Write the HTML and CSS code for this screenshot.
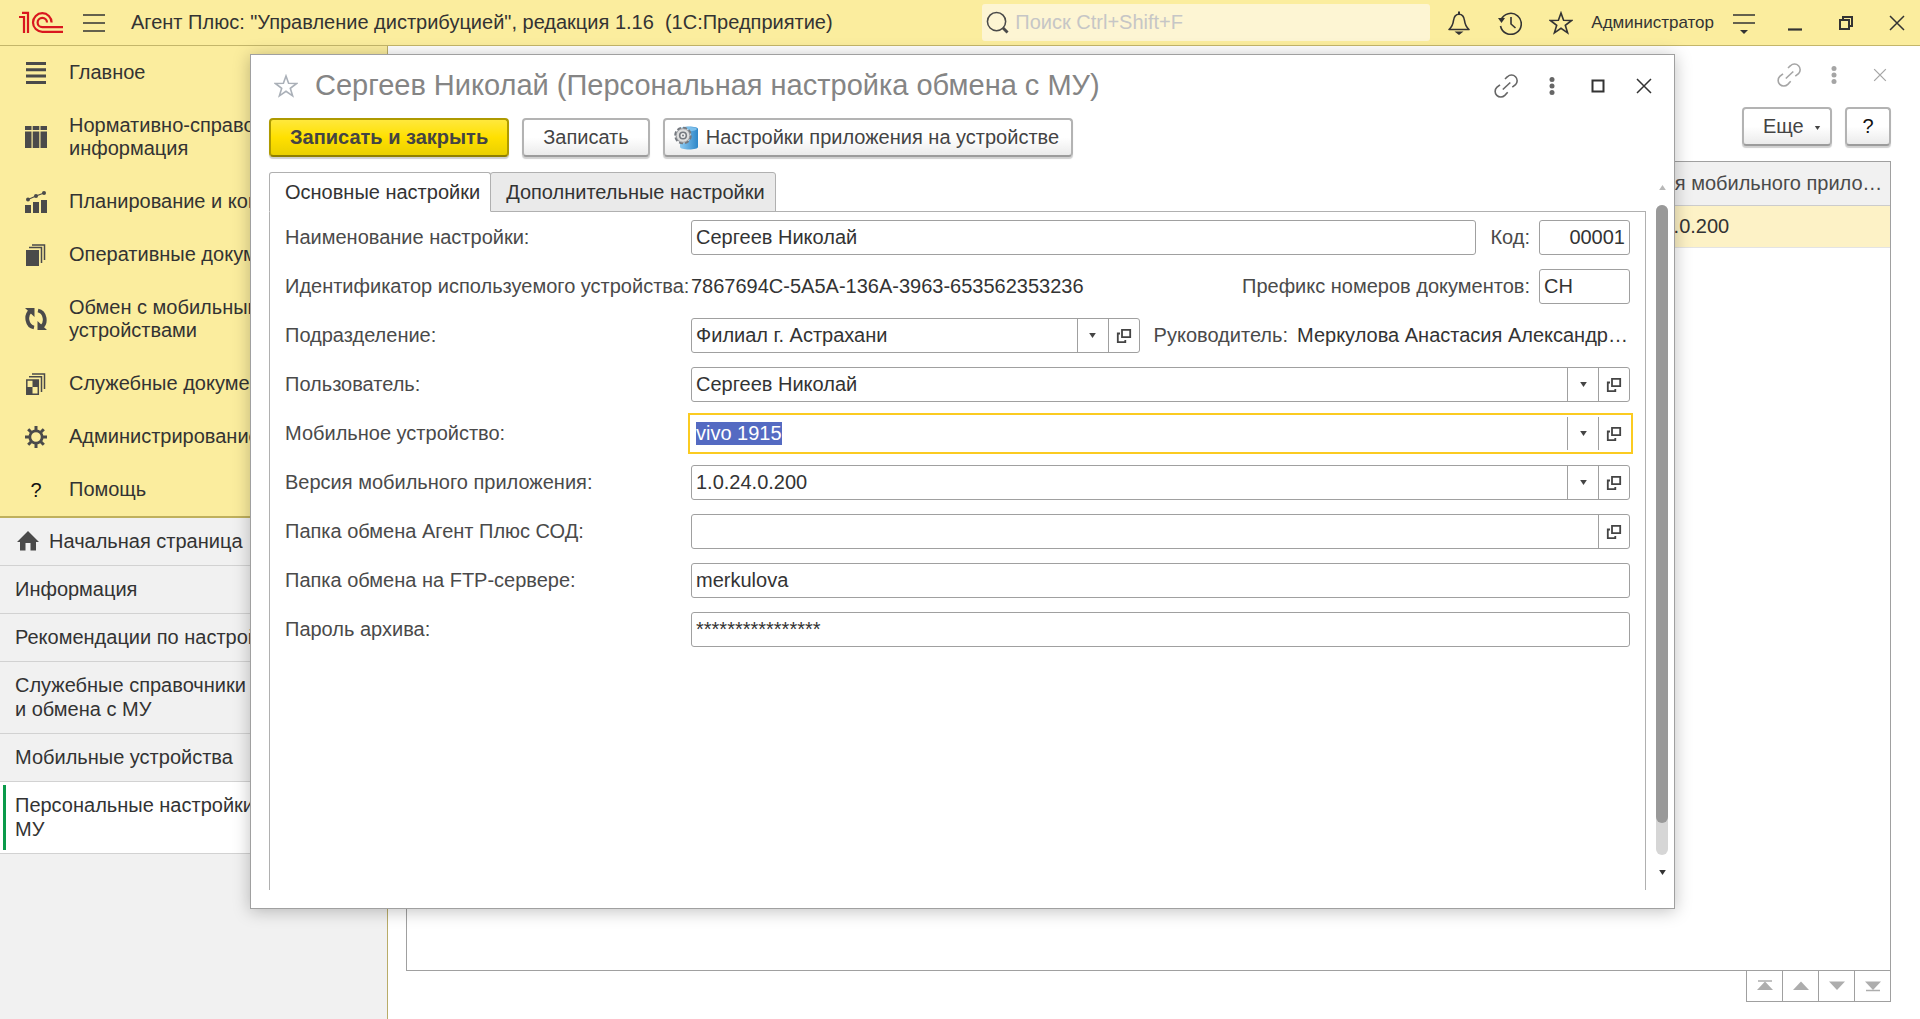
FILE: index.html
```html
<!DOCTYPE html>
<html lang="ru">
<head>
    <meta charset="UTF-8">
    <meta name="viewport" content="width=device-width, initial-scale=1.0">
    <title>Агент Плюс: Управление дистрибуцией</title>
    <link rel="stylesheet" href="styles.css">
</head>
<body>
    <!-- Общие иконки -->
    <svg class="sprite" aria-hidden="true">
        <symbol id="i-link" viewBox="0 0 24 24">
            <g fill="none" stroke="currentColor" stroke-width="1.600">
                <path d="M11 5l2.500-2.300a5.600 5.600 0 0 1 8 8L18.300 13.200"/>
                <path d="M6 10.800l-3.200 2.600a5.600 5.600 0 0 0 8 8l2.900-3.200"/>
                <path d="M8.800 15.500l7.500-7"/>
            </g>
        </symbol>
        <symbol id="i-dots" viewBox="0 0 24 24">
            <g fill="currentColor"><circle cx="12" cy="5.500" r="2.500"/><circle cx="12" cy="12" r="2.500"/><circle cx="12" cy="18.500" r="2.500"/></g>
        </symbol>
        <symbol id="i-close" viewBox="0 0 24 24">
            <path d="M5 5l14 14M19 5L5 19" fill="none" stroke="currentColor" stroke-width="1.500"/>
        </symbol>
        <symbol id="i-star" viewBox="0 0 24 24">
            <path d="M12 2l2.600 7.200 8 .3-6.300 4.800 2.300 7.500-6.600-4.500-6.600 4.500 2.300-7.500-6.300-4.800 8-.3z" fill="none" stroke="currentColor" stroke-width="1.600"/>
        </symbol>
        <symbol id="i-open" viewBox="0 0 16 16">
            <path d="M6 1.800h8.200v7.400H6zM4 5.500H1.800v8.700h7.500V12" fill="none" stroke="currentColor" stroke-width="1.800"/>
        </symbol>
        <symbol id="i-down" viewBox="0 0 8 6">
            <path d="M0 0h8L4 6z" fill="currentColor"/>
        </symbol>
    </svg>

    <!-- Верхняя панель -->
    <header class="topbar">
        <svg class="logo" viewBox="0 0 46 24" fill="none" stroke="#d9171f">
            <path d="M1 6h5v16M4 1.800h6V22" stroke-width="2.200"/>
            <path d="M33.600 11.500A9.300 9.300 0 1 0 24.300 20.800H45" stroke-width="2.200"/>
            <path d="M29 11.500A4.700 4.700 0 1 0 24.300 16.200H45" stroke-width="2.200"/>
        </svg>
        <button class="icon-btn menu-btn" aria-label="Меню">
            <svg viewBox="0 0 24 24"><path d="M1 4h22M1 12h22M1 20h22" stroke="currentColor" stroke-width="1.500"/></svg>
        </button>
        <h1 class="app-title">Агент Плюс: "Управление дистрибуцией", редакция 1.16&nbsp; (1С:Предприятие)</h1>
        <div class="search">
            <svg viewBox="0 0 24 24" fill="none" stroke="#4a4a4a"><circle cx="11" cy="11" r="9.500" stroke-width="1.600"/><path d="M17.500 17.500l5 5" stroke-width="3"/></svg>
            <input type="text" placeholder="Поиск Ctrl+Shift+F" aria-label="Поиск">
        </div>
        <div class="topbar-icons">
            <button class="icon-btn" aria-label="Уведомления">
                <svg viewBox="0 0 24 24"><path d="M2 18.500c3-2.500 4-5 4.500-9C7 5.500 9 3.200 12 3.200s5 2.300 5.500 6.300c.5 4 1.500 6.500 4.500 9z" fill="none" stroke="currentColor" stroke-width="1.600" stroke-linejoin="round"/><path d="M12 .5v3" stroke="currentColor" stroke-width="2"/><path d="M7.500 20.500h9L12 24z" fill="currentColor"/></svg>
            </button>
            <button class="icon-btn" aria-label="История">
                <svg viewBox="0 0 24 24"><path d="M3 9a10.500 10.500 0 1 1-.5 6M13 6v7l4.500 4" fill="none" stroke="currentColor" stroke-width="1.600"/><path d="M0 7h7l-3.500 5z" fill="currentColor"/></svg>
            </button>
            <button class="icon-btn" aria-label="Избранное"><svg><use href="#i-star"/></svg></button>
        </div>
        <a class="user" href="#">Администратор</a>
        <div class="topbar-icons">
            <button class="icon-btn" aria-label="Сервис">
                <svg viewBox="0 0 24 24"><path d="M1 4h22M1 12h22" stroke="currentColor" stroke-width="1.600"/><path d="M8 19h8l-4 4z" fill="currentColor"/></svg>
            </button>
            <button class="icon-btn" aria-label="Свернуть">
                <svg viewBox="0 0 24 24"><path d="M5 18.500h14" stroke="currentColor" stroke-width="2.200"/></svg>
            </button>
            <button class="icon-btn" aria-label="Восстановить">
                <svg viewBox="0 0 24 24" fill="none" stroke="currentColor" stroke-width="2"><path d="M6 9h9v9H6zM9 9V6h9v9h-3"/></svg>
            </button>
            <button class="icon-btn" aria-label="Закрыть"><svg><use href="#i-close"/></svg></button>
        </div>
    </header>

    <div class="workspace">
        <!-- Боковая панель -->
        <aside class="sidebar">
            <nav class="sections">
                <a class="section" href="#">
                    <svg viewBox="0 0 22 22"><path d="M1 1.500h20M1 7.800h20M1 14.100h20M1 20.400h20" stroke="currentColor" stroke-width="3"/></svg>
                    <span>Главное</span>
                </a>
                <a class="section" href="#">
                    <svg viewBox="0 0 22 22" fill="currentColor"><path d="M0 0h6.500v4H0zM7.700 0h6.600v4H7.700zM15.500 0H22v4h-6.500zM0 5.500h6.500V22H0zM7.700 5.500h6.600V22H7.700zM15.500 5.500H22V22h-6.500z"/></svg>
                    <span>Нормативно-справочная<br>информация</span>
                </a>
                <a class="section" href="#">
                    <svg viewBox="0 0 22 22" fill="currentColor"><path d="M0 14h6v8H0zM8 11h6v11H8zM16 9h6v13h-6z"/><circle cx="3" cy="8.500" r="2"/><circle cx="11" cy="5" r="2"/><circle cx="19" cy="2" r="2"/><path d="M3 8.500L11 5l8-3" fill="none" stroke="currentColor" stroke-width="1.200"/></svg>
                    <span>Планирование и контроль</span>
                </a>
                <a class="section" href="#">
                    <svg viewBox="0 0 22 22"><path d="M1 6h13v16H1z" fill="currentColor"/><path d="M4 3.500h12.500V19M7 1h12.500v15" fill="none" stroke="currentColor" stroke-width="1.500"/></svg>
                    <span>Оперативные документы</span>
                </a>
                <a class="section" href="#">
                    <svg viewBox="0 0 22 22"><path d="M9 19.500C1.500 18 .5 7.500 5 3.500M13 2.500C20.500 4 21.500 14.500 17 18.500" fill="none" stroke="currentColor" stroke-width="3.800"/><path d="M0 0h9.500v9zM22 22h-9.500v-9z" fill="currentColor"/></svg>
                    <span>Обмен с мобильными<br>устройствами</span>
                </a>
                <a class="section" href="#">
                    <svg viewBox="0 0 22 22"><path d="M1.800 7h11.500v14.200H1.800z" fill="none" stroke="currentColor" stroke-width="1.500"/><path d="M7.500 7h6v7h-6zM1.500 14h6v7h-6z" fill="currentColor"/><path d="M4 3.800h12.500V19M7 1h12.500v15" fill="none" stroke="currentColor" stroke-width="1.500"/></svg>
                    <span>Служебные документы</span>
                </a>
                <a class="section" href="#">
                    <svg viewBox="0 0 22 22" fill="none" stroke="currentColor"><circle cx="11" cy="11" r="6.200" stroke-width="2.800"/><path d="M11 0v4M11 18v4M0 11h4M18 11h4M3.200 3.200l3 3M15.800 15.800l3 3M3.200 18.800l3-3M15.800 6.200l3-3" stroke-width="3"/></svg>
                    <span>Администрирование</span>
                </a>
                <a class="section" href="#">
                    <b class="section-mark">?</b>
                    <span>Помощь</span>
                </a>
            </nav>
            <nav class="windows">
                <a class="window-tab home" href="#">
                    <svg viewBox="0 0 22 20"><path d="M11 0l11 11h-3v8.500h-5.500V12h-5v7.500H3V11H0z" fill="currentColor"/></svg>
                    Начальная страница
                </a>
                <a class="window-tab" href="#">Информация</a>
                <a class="window-tab" href="#">Рекомендации по настройке</a>
                <a class="window-tab" href="#">Служебные справочники настройки<br>и обмена с МУ</a>
                <a class="window-tab" href="#">Мобильные устройства</a>
                <a class="window-tab active" href="#">Персональные настройки обмена с<br>МУ</a>
            </nav>
        </aside>

        <!-- Список настроек -->
        <main class="list-page">
            <div class="page-icons">
                <button class="icon-btn" aria-label="Ссылка"><svg><use href="#i-link"/></svg></button>
                <button class="icon-btn" aria-label="Ещё"><svg><use href="#i-dots"/></svg></button>
                <button class="icon-btn small" aria-label="Закрыть"><svg><use href="#i-close"/></svg></button>
            </div>
            <div class="page-actions">
                <button class="btn more">Еще <svg><use href="#i-down"/></svg></button>
                <button class="btn help">?</button>
            </div>
            <div class="table-box">
                <table>
                    <colgroup><col><col class="col-version"></colgroup>
                    <thead><tr><th></th><th>Версия мобильного приложения</th></tr></thead>
                    <tbody><tr><td></td><td>1.0.24.0.200</td></tr></tbody>
                </table>
            </div>
            <div class="pager">
                <button aria-label="В начало"><svg viewBox="0 0 16 12"><path d="M1 1h14" stroke="currentColor" stroke-width="1.500"/><path d="M8 1.500l8 8.500H0z" fill="currentColor"/></svg></button>
                <button aria-label="Вверх"><svg viewBox="0 0 16 12"><path d="M8 1.500l8 8.500H0z" fill="currentColor"/></svg></button>
                <button aria-label="Вниз"><svg viewBox="0 0 16 12"><path d="M0 1.500h16L8 10z" fill="currentColor"/></svg></button>
                <button aria-label="В конец"><svg viewBox="0 0 16 12"><path d="M1 10.500h14" stroke="currentColor" stroke-width="1.500"/><path d="M0 1.500h16L8 10z" fill="currentColor"/></svg></button>
            </div>
        </main>
    </div>

    <!-- Окно настройки -->
    <section class="dialog" role="dialog" aria-labelledby="dialog-title">
        <div class="dialog-head">
            <button class="icon-btn fav" aria-label="В избранное"><svg><use href="#i-star"/></svg></button>
            <h2 id="dialog-title">Сергеев Николай (Персональная настройка обмена с МУ)</h2>
            <div class="dialog-icons">
                <button class="icon-btn soft" aria-label="Ссылка"><svg><use href="#i-link"/></svg></button>
                <button class="icon-btn soft" aria-label="Ещё"><svg><use href="#i-dots"/></svg></button>
                <button class="icon-btn" aria-label="Развернуть"><svg viewBox="0 0 24 24"><path d="M6.500 6.500h11v11h-11z" fill="none" stroke="currentColor" stroke-width="2"/></svg></button>
                <button class="icon-btn" aria-label="Закрыть"><svg><use href="#i-close"/></svg></button>
            </div>
        </div>

        <div class="toolbar">
            <button class="btn primary">Записать и закрыть</button>
            <button class="btn">Записать</button>
            <button class="btn with-icon">
                <svg viewBox="0 0 24 24">
                    <defs><linearGradient id="cyl"><stop offset="0" stop-color="#8ecbf2"/><stop offset="1" stop-color="#2d86c8"/></linearGradient></defs>
                    <path d="M6 3v18c0 1.500 4 2.500 9 2.500s9-1 9-2.500V3c0-1.500-4-2.500-9-2.500S6 1.500 6 3z" fill="url(#cyl)"/>
                    <ellipse cx="15" cy="3" rx="8" ry="2" fill="#7dc0ec"/>
                    <circle cx="9" cy="9.500" r="7.800" fill="#dcdcdc" stroke="#75797f" stroke-width="2" stroke-dasharray="4 2.100"/>
                    <circle cx="9" cy="9.500" r="6.800" fill="#dedede" stroke="#8a8e94" stroke-width=".8"/>
                    <circle cx="9" cy="9.500" r="3.300" fill="#eee" stroke="#75797f" stroke-width="1.600"/>
                    <circle cx="9" cy="9.500" r="1" fill="#75797f"/>
                </svg>
                Настройки приложения на устройстве
            </button>
        </div>

        <div class="dialog-body">
            <div class="pages">
                <div class="tabs" role="tablist">
                    <button class="tab active" role="tab" aria-selected="true">Основные настройки</button>
                    <button class="tab" role="tab" aria-selected="false">Дополнительные настройки</button>
                </div>
                <form class="form">
                    <div class="row">
                        <label for="name">Наименование настройки:</label>
                        <div class="field"><input id="name" type="text" value="Сергеев Николай"></div>
                        <label class="side-label" for="code">Код:</label>
                        <div class="field short"><input id="code" class="num" type="text" value="00001"></div>
                    </div>
                    <div class="row">
                        <label for="device-id">Идентификатор используемого устройства:</label>
                        <output id="device-id">7867694C-5A5A-136A-3963-653562353236</output>
                        <label class="side-label" for="prefix">Префикс номеров документов:</label>
                        <div class="field short"><input id="prefix" type="text" value="СН"></div>
                    </div>
                    <div class="row">
                        <label for="dept">Подразделение:</label>
                        <div class="field">
                            <input id="dept" type="text" value="Филиал г. Астрахани">
                            <button type="button" aria-label="Выбрать"><svg class="arrow"><use href="#i-down"/></svg></button>
                            <button type="button" aria-label="Открыть"><svg><use href="#i-open"/></svg></button>
                        </div>
                        <label class="side-label" for="head">Руководитель:</label>
                        <output id="head" class="head-name">Меркулова Анастасия Александровна</output>
                    </div>
                    <div class="row">
                        <label for="user">Пользователь:</label>
                        <div class="field">
                            <input id="user" type="text" value="Сергеев Николай">
                            <button type="button" aria-label="Выбрать"><svg class="arrow"><use href="#i-down"/></svg></button>
                            <button type="button" aria-label="Открыть"><svg><use href="#i-open"/></svg></button>
                        </div>
                    </div>
                    <div class="row">
                        <label for="device">Мобильное устройство:</label>
                        <div class="field focused">
                            <input id="device" type="text" value="vivo 1915">
                            <button type="button" aria-label="Выбрать"><svg class="arrow"><use href="#i-down"/></svg></button>
                            <button type="button" aria-label="Открыть"><svg><use href="#i-open"/></svg></button>
                        </div>
                    </div>
                    <div class="row">
                        <label for="version">Версия мобильного приложения:</label>
                        <div class="field">
                            <input id="version" type="text" value="1.0.24.0.200">
                            <button type="button" aria-label="Выбрать"><svg class="arrow"><use href="#i-down"/></svg></button>
                            <button type="button" aria-label="Открыть"><svg><use href="#i-open"/></svg></button>
                        </div>
                    </div>
                    <div class="row">
                        <label for="folder">Папка обмена Агент Плюс СОД:</label>
                        <div class="field">
                            <input id="folder" type="text">
                            <button type="button" aria-label="Открыть"><svg><use href="#i-open"/></svg></button>
                        </div>
                    </div>
                    <div class="row">
                        <label for="ftp">Папка обмена на FTP-сервере:</label>
                        <div class="field"><input id="ftp" type="text" value="merkulova"></div>
                    </div>
                    <div class="row">
                        <label for="password">Пароль архива:</label>
                        <div class="field"><input id="password" type="text" value="****************"></div>
                    </div>
                </form>
            </div>
            <div class="scrollbar">
                <svg class="up" viewBox="0 0 8 6"><path d="M0 6h8L4 0z" fill="currentColor"/></svg>
                <div class="track"><div class="thumb"></div></div>
                <svg class="down"><use href="#i-down"/></svg>
            </div>
        </div>
    </section>

    <script>
        // Поле, открытое для ввода, выделено целиком
        const device = document.getElementById('device');
        device.focus();
        device.select();
    </script>
</body>
</html>
```
FILE: styles.css
```css
* {
    margin: 0;
    padding: 0;
    box-sizing: border-box;
}

body {
    height: 100vh;
    display: flex;
    flex-direction: column;
    position: relative;
    overflow: hidden;
    background: #fff;
    color: #333;
    font-family: "Liberation Sans", Arial, sans-serif;
    font-size: 20px;
}

a {
    color: inherit;
    text-decoration: none;
}

button, input {
    font: inherit;
    color: inherit;
}

button {
    border: none;
    background: none;
}

.sprite {
    position: absolute;
    width: 0;
    height: 0;
}

.icon-btn {
    display: flex;
    flex: none;
    width: 24px;
    height: 24px;
}

.icon-btn svg {
    width: 100%;
    height: 100%;
}

/* Верхняя панель */
.topbar {
    display: flex;
    align-items: center;
    height: 46px;
    padding: 0 11px 0 18px;
    background: #fbed9e;
    border-bottom: 1px solid #c4b66a;
}

.logo {
    width: 46px;
    height: 24px;
}

.menu-btn {
    margin: 0 25px 0 18px;
}

.app-title {
    flex: 1;
    font-size: 20px;
    font-weight: normal;
    white-space: nowrap;
}

.search {
    display: flex;
    align-items: center;
    width: 448px;
    height: 37px;
    padding-left: 4px;
    gap: 6px;
    margin-right: 17px;
    border-radius: 3px;
    background: #fdf5d3;
}

.search svg {
    width: 23px;
    height: 23px;
}

.search input {
    flex: 1;
    border: none;
    background: none;
}

.search input::placeholder {
    color: #c6c6c6;
}

.topbar-icons {
    display: flex;
    gap: 27px;
}

.user {
    margin: 0 18px;
    font-size: 17px;
}

.workspace {
    flex: 1;
    display: flex;
    min-height: 0;
}

/* Боковая панель */
.sidebar {
    width: 388px;
    background: #f1f1f1;
    border-right: 1px solid #b9ac68;
}

.sections {
    background: #fbed9e;
    border-bottom: 2px solid #bfb05c;
}

.section {
    display: flex;
    align-items: center;
    gap: 22px;
    padding: 15px 25px;
    line-height: 23px;
    white-space: nowrap;
}

.section svg,
.section-mark {
    width: 22px;
    height: 22px;
    color: #4a4a4a;
}

.section-mark {
    color: #111;
    font-weight: normal;
    text-align: center;
}

.window-tab {
    display: block;
    padding: 11px 15px 12px;
    border-bottom: 1px solid #d2d2d2;
    line-height: 24px;
    white-space: nowrap;
}

.window-tab.home {
    display: flex;
    align-items: center;
    gap: 10px;
    padding-left: 17px;
}

.home svg {
    width: 22px;
    height: 20px;
    color: #4a4a4a;
}

.window-tab.active {
    position: relative;
    background: #fff;
}

.window-tab.active::before {
    content: "";
    position: absolute;
    left: 3px;
    top: 3px;
    bottom: 3px;
    width: 3px;
    background: #0a9a4a;
}

/* Список */
.list-page {
    flex: 1;
    display: flex;
    flex-direction: column;
    min-width: 0;
    padding: 17px 29px 17px 18px;
}

.page-icons {
    display: flex;
    align-items: center;
    justify-content: flex-end;
    gap: 21px;
    padding-right: 1px;
    color: #a5a5a5;
}

.page-icons .small {
    width: 20px;
    height: 20px;
    margin-left: 3px;
}

.page-actions {
    display: flex;
    justify-content: flex-end;
    gap: 13px;
    margin: 20px 0 15px;
}

.btn {
    height: 39px;
    padding: 0 19px;
    border: 2px solid #b3b3b3;
    border-bottom-color: #9c9c9c;
    border-radius: 4px;
    background: linear-gradient(#fff 50%, #ebebeb);
    box-shadow: 0 2px 1px #d0d0d0;
    color: #444;
    white-space: nowrap;
}

.btn.more {
    width: 90px;
    padding: 0 8px 0 18px;
}

.more svg {
    width: 7px;
    height: 4px;
    margin: 0 0 3px 5px;
}

.btn.help {
    width: 46px;
    padding: 0;
    color: #111;
}

.table-box {
    flex: 1;
    border: 1px solid #a0a0a0;
}

table {
    width: 100%;
    table-layout: fixed;
    border-collapse: collapse;
}

.col-version {
    width: 278px;
}

th, td {
    padding: 0 4px 0 6px;
    overflow: hidden;
    text-align: left;
    text-overflow: ellipsis;
    white-space: nowrap;
    font-weight: normal;
}

th {
    height: 43px;
    background: #f1f1f1;
    border-bottom: 1px solid #ccc;
    color: #4a4a4a;
}

td {
    height: 42px;
    background: #fdf2c6;
    border-bottom: 1px solid #e4e4e4;
}

.pager {
    display: flex;
    align-self: flex-end;
    border: solid #a0a0a0;
    border-width: 0 1px 1px 0;
}

.pager button {
    display: flex;
    align-items: center;
    justify-content: center;
    width: 36px;
    height: 30px;
    border-left: 1px solid #a0a0a0;
    color: #adadad;
}

.pager svg {
    width: 16px;
    height: 12px;
}

/* Окно поверх списка */
.dialog {
    position: absolute;
    inset: 54px 245px 110px 250px;
    display: flex;
    flex-direction: column;
    padding: 0 0 18px 18px;
    border: 1px solid #a0a0a0;
    background: #fff;
    box-shadow: 0 2px 16px rgba(0, 0, 0, 0.25);
}

.dialog-head {
    display: flex;
    align-items: center;
    height: 63px;
    padding: 0 18px 2px 0;
}

.fav {
    margin: 0 17px 0 5px;
    color: #aab0b8;
}

.soft {
    color: #666;
}

.dialog-head h2 {
    flex: 1;
    font-size: 29px;
    font-weight: normal;
    color: #858585;
    white-space: nowrap;
}

.dialog-icons {
    display: flex;
    gap: 22px;
}

.toolbar {
    display: flex;
    gap: 13px;
    margin-bottom: 15px;
}

.btn.primary {
    border-color: #ae9a00 #ae9a00 #8f7f00;
    background: linear-gradient(#ffe83c, #ffe000 50%, #ead000);
    font-weight: bold;
}

.btn.with-icon {
    display: flex;
    align-items: center;
    gap: 8px;
    padding: 0 12px 0 9px;
}

.with-icon svg {
    width: 24px;
    height: 24px;
}

.dialog-body {
    flex: 1;
    display: flex;
    min-height: 0;
}

.pages {
    flex: 1;
    display: flex;
    flex-direction: column;
    min-width: 0;
}

.tabs {
    display: flex;
    margin-bottom: -1px;
}

.tab {
    height: 40px;
    padding: 0 10px 0 15px;
    border: 1px solid #b0b0b0;
    border-radius: 3px 3px 0 0;
    background: #eaeaea;
}

.tab + .tab {
    margin-left: -1px;
}

.tab.active {
    z-index: 1;
    border-bottom-color: #fff;
    background: #fff;
}

.form {
    flex: 1;
    display: flex;
    flex-direction: column;
    gap: 14px;
    padding: 8px 15px;
    border: solid #b0b0b0;
    border-width: 1px 1px 0;
}

.row {
    display: flex;
    align-items: center;
    height: 35px;
    color: #4a4a4a;
}

.row > label:first-child {
    flex: none;
    width: 406px;
}

.row output {
    color: #333;
}

.side-label {
    margin-left: auto;
    padding: 0 9px 0 14px;
}

.field {
    flex: 1;
    display: flex;
    min-width: 0;
    height: 35px;
    border: 1px solid #a0a0a0;
    border-radius: 3px;
    color: #333;
}

.field.short {
    flex: none;
    width: 91px;
}

.field input {
    flex: 1;
    min-width: 0;
    padding: 0 4px;
    border: none;
    outline: none;
    background: none;
}

.field .num {
    text-align: right;
}

.field input::selection {
    background: #546ac2;
    color: #fff;
}

.field button {
    display: flex;
    flex: none;
    align-items: center;
    justify-content: center;
    width: 31px;
    border-left: 1px solid #a0a0a0;
    color: #444;
}

.field button svg {
    width: 16px;
    height: 16px;
}

.field button .arrow {
    width: 7px;
    height: 5px;
}

.field.focused {
    border-color: transparent;
    outline: 2px solid #fbcb21;
    outline-offset: 1px;
    border-radius: 0;
}

.head-name {
    flex: none;
    width: 333px;
    overflow: hidden;
    text-overflow: ellipsis;
    white-space: nowrap;
}

.scrollbar {
    display: flex;
    flex-direction: column;
    align-items: center;
    width: 28px;
    padding: 13px 0 15px 4px;
    gap: 15px;
}

.scrollbar svg {
    width: 7px;
    height: 5px;
}

.scrollbar .up {
    color: #b8b8b8;
}

.track {
    flex: 1;
    width: 12px;
    border-radius: 6px;
    background: #d6d6d6;
}

.thumb {
    height: 95%;
    border-radius: 6px;
    background: #999;
}
```
